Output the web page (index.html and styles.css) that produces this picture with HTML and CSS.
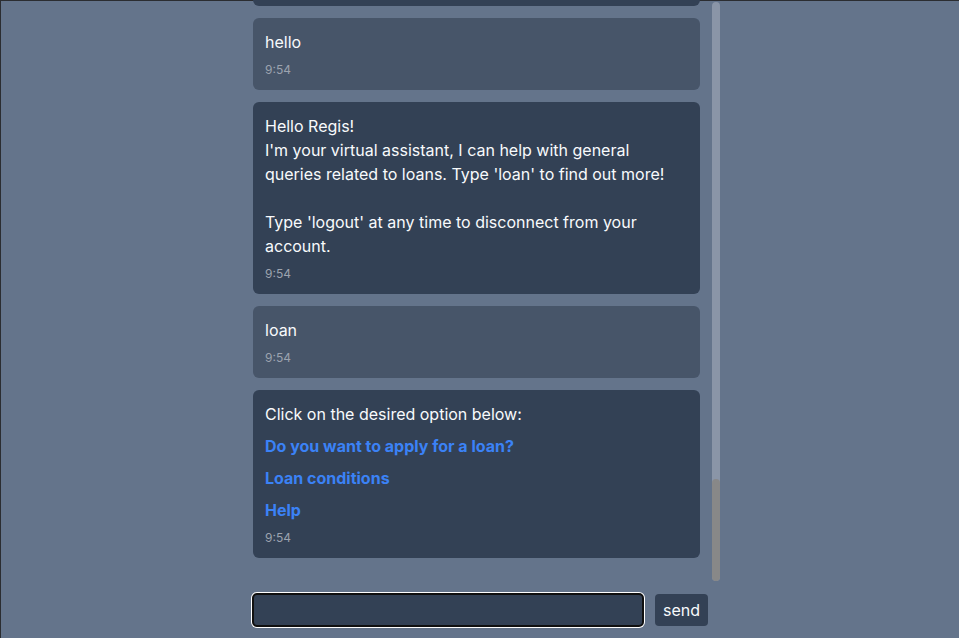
FILE: index.html
```html
<!DOCTYPE html>
<html lang="en">
<head>
<meta charset="utf-8">
<title>Loan assistant</title>
<link rel="stylesheet" href="styles.css">
</head>
<body>
<div class="app">
  <div class="chat">
    <div class="messages">
      <div class="msg bot earlier"></div>
      <div class="msg user"><div class="text">hello</div><div class="time">9:54</div></div>
      <div class="msg bot"><div class="text">Hello Regis!
I'm your virtual assistant, I can help with general queries related to loans. Type 'loan' to find out more!

Type 'logout' at any time to disconnect from your account.</div><div class="time">9:54</div></div>
      <div class="msg user"><div class="text">loan</div><div class="time">9:54</div></div>
      <div class="msg bot"><div class="text">Click on the desired option below:</div><a class="opt" href="#">Do you want to apply for a loan?</a><a class="opt" href="#">Loan conditions</a><a class="opt" href="#">Help</a><div class="time">9:54</div></div>
    </div>
    <div class="scrollbar"><div class="thumb"></div></div>
  </div>
  <form class="composer" onsubmit="return false">
    <input class="field" type="text" aria-label="Message">
    <button class="send" type="button">send</button>
  </form>
</div>
</body>
</html>
```
FILE: styles.css
```css
* { box-sizing: border-box; }
html, body { margin: 0; height: 100%; }
body {
  background: #64748b;
  font-family: Inter, "Noto Sans", sans-serif;
  font-size: 16px;
  color: #f8fafc;
  box-shadow: inset 1px 1px 0 #2b2d31;
  overflow: hidden;
}
.app {
  width: 457px;
  height: 100%;
  margin: 0 auto;
  display: flex;
  flex-direction: column;
}
.chat {
  width: 469px;
  height: 581px;
  flex: none;
  display: flex;
  gap: 12px;
}
.messages {
  width: 449px;
  height: 100%;
  overflow: hidden;
  display: flex;
  flex-direction: column;
  justify-content: flex-end;
  gap: 12px;
  padding: 0 0 23px 2px;
}
.msg {
  flex: none;
  display: flex;
  flex-direction: column;
  gap: 8px;
  padding: 12px;
  border-radius: 6px;
}
.msg.bot { background: #334155; }
.msg.user { background: #475569; }
.msg.earlier {
  height: 6px;
  padding: 0;
  border-radius: 0 0 6px 6px;
}
.text {
  line-height: 24px;
  white-space: pre-line;
}
.opt {
  line-height: 24px;
  font-weight: 700;
  color: #3b82f6;
  text-decoration: none;
}
.time {
  font-size: 12px;
  line-height: 16px;
  color: #9ca3af;
}
.scrollbar {
  width: 8px;
  margin-top: 2px;
  background: #8a95a7;
  border-radius: 4px;
  display: flex;
  flex-direction: column;
  justify-content: flex-end;
}
.thumb {
  height: 102px;
  background: #888888;
  border-radius: 4px;
}
.composer {
  margin: 12px 0 0;
  display: flex;
  align-items: center;
  gap: 11px;
}
.field {
  margin-left: 1px;
  width: 392px;
  height: 34px;
  background: #334155;
  border: 2px solid #101010;
  border-radius: 5px;
  box-shadow: 0 0 0 1px #ffffff;
  color: #f8fafc;
  font: inherit;
  outline: none;
  padding: 0 8px;
}
.send {
  width: 53px;
  height: 32px;
  background: #334155;
  color: #f8fafc;
  border: none;
  border-radius: 4px;
  font: inherit;
  padding: 0;
}
```
